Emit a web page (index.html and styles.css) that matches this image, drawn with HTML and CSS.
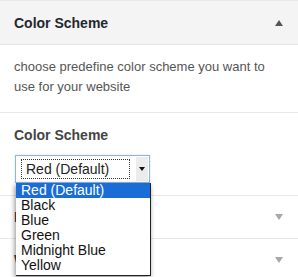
FILE: index.html
```html
<!DOCTYPE html>
<html lang="en">
<head>
    <meta charset="UTF-8">
    <title>Color Scheme</title>
    <link rel="stylesheet" href="styles.css">
</head>
<body>
    <div class="panel">
        <div class="panel-header">
            <div class="panel-title">Color Scheme</div>
            <span class="arrow arrow-up"></span>
        </div>

        <div class="panel-desc">choose predefine color scheme you want to use for your website</div>

        <div class="field">
            <div class="field-label">Color Scheme</div>
            <div class="select-wrap">
                <div class="select">
                    <div class="select-value">Red (Default)</div>
                    <div class="select-btn"><span class="caret"></span></div>
                </div>
                <ul class="select-list">
                    <li class="selected">Red (Default)</li>
                    <li>Black</li>
                    <li>Blue</li>
                    <li>Green</li>
                    <li>Midnight Blue</li>
                    <li>Yellow</li>
                </ul>
            </div>
        </div>

        <div class="section">
            <div class="section-title">Layout</div>
            <span class="arrow arrow-down"></span>
        </div>
        <div class="section">
            <div class="section-title">Widgets</div>
            <span class="arrow arrow-down"></span>
        </div>
    </div>
</body>
</html>
```

FILE: styles.css
```css
* {
    margin: 0;
    padding: 0;
    box-sizing: border-box;
}

body {
    font-family: "Liberation Sans", Arial, sans-serif;
    background: #ffffff;
    color: #555;
}

.panel {
    width: 298px;
    border-top: 1px solid #e8e8e8;
}

.panel-header {
    height: 44px;
    display: flex;
    align-items: center;
    justify-content: space-between;
    padding: 0 15px 0 14px;
    background: #f4f4f4;
    border-bottom: 1px solid #e6e6e6;
}

.panel-title {
    font-size: 14px;
    font-weight: bold;
    color: #23282d;
}

.arrow {
    width: 0;
    height: 0;
    border-left: 4px solid transparent;
    border-right: 4px solid transparent;
}

.arrow-up {
    border-bottom: 6px solid #555;
    margin-top: 1px;
}

.arrow-down {
    border-top: 6px solid #a8a8a8;
}

.panel-desc {
    padding: 12px 20px 15px 14px;
    font-size: 13px;
    line-height: 20px;
    border-bottom: 1px solid #e8e8e8;
}

.field {
    padding: 14px 0 12px 15px;
    border-bottom: 1px solid #e8e8e8;
}

.field-label {
    font-size: 14px;
    font-weight: bold;
    color: #444;
    margin-left: -1px;
    margin-bottom: 12px;
}

.select-wrap {
    position: relative;
    width: 135px;
}

.select {
    height: 28px;
    display: flex;
    align-items: center;
    background: #fff;
    border: 1px solid #8fb4e0;
    box-shadow: 0 0 1px #9cc2ef;
    padding: 2px 1px 2px 5px;
}

.select-value {
    flex: 1;
    height: 20px;
    line-height: 18px;
    font-size: 14px;
    color: #222;
    padding-left: 4px;
    border: 1px dotted #333;
    margin-right: 6px;
}

.select-btn {
    width: 12px;
    height: 24px;
    background: #ececec;
    display: flex;
    align-items: center;
    justify-content: center;
}

.caret {
    width: 0;
    height: 0;
    border-left: 3px solid transparent;
    border-right: 3px solid transparent;
    border-top: 4px solid #111;
}

.select-list {
    position: absolute;
    top: 28px;
    left: 1px;
    width: 135px;
    list-style: none;
    background: #fff;
    border-right: 1px solid #222;
    border-bottom: 1px solid #222;
    box-shadow: -1px 2px 5px rgba(0, 0, 0, 0.45);
    padding-bottom: 2px;
}

.select-list li {
    font-size: 14px;
    line-height: 15px;
    color: #111;
    padding-left: 5px;
}

.select-list li.selected {
    background: #1a6dd6;
    color: #fff;
}

.section {
    height: 43px;
    display: flex;
    align-items: center;
    justify-content: space-between;
    padding: 0 15px 0 14px;
    border-bottom: 1px solid #e8e8e8;
}

.section-title {
    font-size: 14px;
    font-weight: bold;
    color: #444;
}
```
